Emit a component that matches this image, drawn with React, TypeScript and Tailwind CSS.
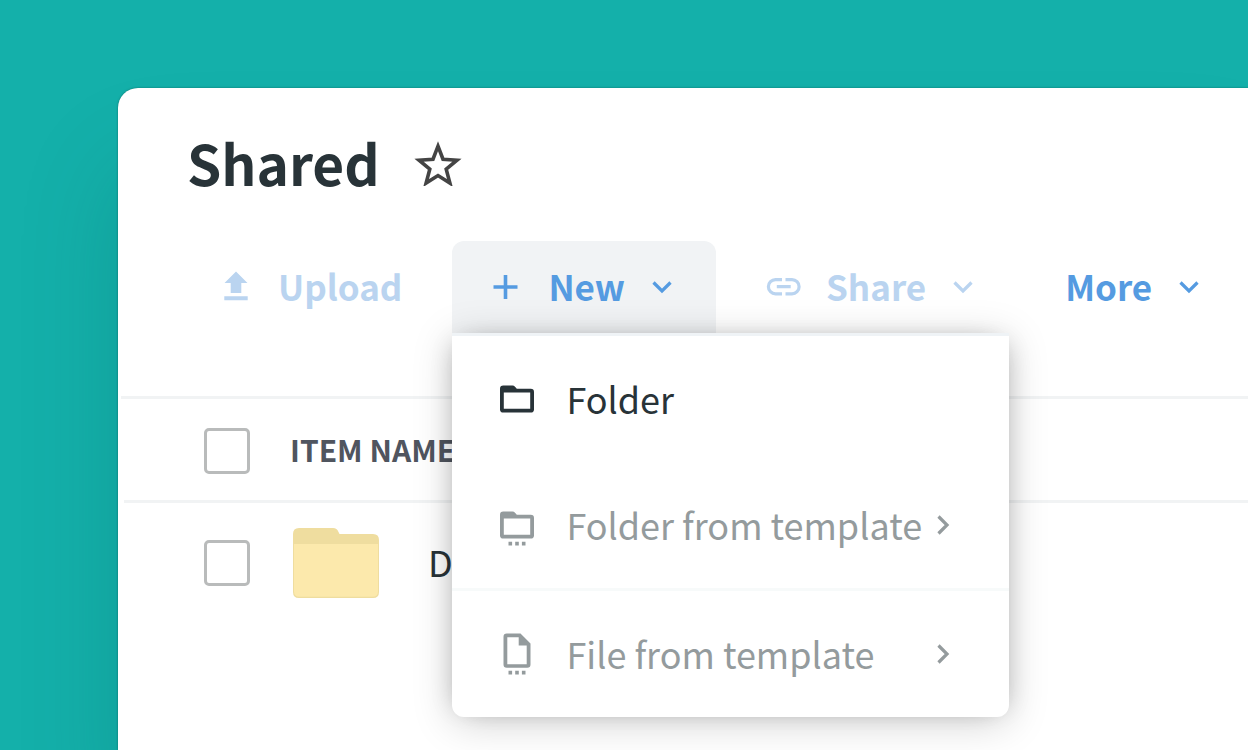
import type { ReactNode } from "react";

function Chevron({ direction = "down" }: { direction?: "down" | "right" }) {
  return (
    <svg viewBox="0 0 36 36" className="size-9 shrink-0" fill="none" stroke="currentColor" strokeWidth="3.200" aria-hidden="true">
      {direction === "down" ? <path d="M9.500 13.500 18 22l8.500-8.500" /> : <path d="M13.500 9.500 22 18l-8.500 8.500" />}
    </svg>
  );
}

function StarIcon() {
  return (
    <svg viewBox="0 -2 48 48" className="size-12" fill="none" stroke="currentColor" strokeWidth="3.600" aria-hidden="true">
      <path d="M24 6.200 29 19.200 43 20.200 32.200 29.200 35.900 43.100 24 35.600 12.100 43.100 15.800 29.200 5 20.200 19 19.200Z" />
    </svg>
  );
}

function UploadIcon() {
  return (
    <svg viewBox="0 0 36 36" className="size-9 shrink-0" fill="currentColor" aria-hidden="true">
      <path d="M18 2.500 29.500 14H23.300V24H12.700V14H6.500ZM6.300 27.200H29.700V31.200H6.300Z" />
    </svg>
  );
}

function PlusIcon() {
  return (
    <svg viewBox="0 0 36 36" className="size-9 shrink-0" stroke="currentColor" strokeWidth="3.600" aria-hidden="true">
      <path d="M17.500 6v24M5.500 18h24" />
    </svg>
  );
}

function LinkIcon() {
  return (
    <svg viewBox="0 0 36 36" className="size-9 shrink-0" fill="none" stroke="currentColor" strokeWidth="3.200" aria-hidden="true">
      <path d="M16 10.600H9.500a7.100 7.100 0 0 0 0 14.200H16M19.500 10.600H26a7.100 7.100 0 0 1 0 14.200H19.500M10.800 17.700H24.700" />
    </svg>
  );
}

function FolderOutlineIcon() {
  return (
    <svg viewBox="0 0 36 36" className="size-9 shrink-0" aria-hidden="true">
      <path
        fill="currentColor"
        fillRule="evenodd"
        d="M4.300 4.500H13.500Q15 4.500 16 5.700L17.800 7.800H31.700Q35 7.800 35 11V28.400Q35 31.500 31.700 31.500H4.300Q1 31.500 1 28.400V7.700Q1 4.500 4.300 4.500ZM4.800 11.500V27.800H31.200V11.500Z"
      />
    </svg>
  );
}

function FolderTemplateIcon() {
  return (
    <svg viewBox="0 0 36 36" className="size-9 shrink-0 overflow-visible" fill="currentColor" aria-hidden="true">
      <path
        fillRule="evenodd"
        d="M4.300 4.500H13.500Q15 4.500 16 5.700L17.800 7.800H31.700Q35 7.800 35 11V28.400Q35 31.500 31.700 31.500H4.300Q1 31.500 1 28.400V7.700Q1 4.500 4.300 4.500ZM4.800 11.500V27.800H31.200V11.500Z"
      />
      <path d="M9.500 34.800h3.600v3.600H9.500ZM16.200 34.800h3.600v3.600h-3.600ZM22.900 34.800h3.600v3.600h-3.600Z" />
    </svg>
  );
}

function FileTemplateIcon() {
  return (
    <svg viewBox="0 0 36 44" className="h-11 w-9 shrink-0" fill="currentColor" aria-hidden="true">
      <path
        fillRule="evenodd"
        d="M7.800 1.500H21.500L31.500 11.500V32.500Q31.500 35.800 28.200 35.800H7.800Q4.500 35.800 4.500 32.500V4.800Q4.500 1.500 7.800 1.500ZM8.300 5.300V32.200H27.700V13.500H19.700V5.300Z"
      />
      <path d="M9.500 38.800h3.600v3.600H9.500ZM16.200 38.800h3.600v3.600h-3.600ZM22.900 38.800h3.600v3.600h-3.600Z" />
    </svg>
  );
}

function FolderThumb() {
  return (
    <svg viewBox="0 0 86 70" className="h-[70px] w-[86px]" aria-label="Folder" role="img">
      <path fill="#efdd9f" d="M6 0H40Q44 0 45.500 4L46.500 6H80Q86 6 86 12V64Q86 70 80 70H6Q0 70 0 64V6Q0 0 6 0Z" />
      <path fill="#fce9ac" d="M1 16H85V63.500Q85 68.800 79.500 68.800H6.500Q1 68.800 1 63.500Z" />
    </svg>
  );
}

function ToolbarButton({ icon, label, disabled = false }: { icon?: ReactNode; label: string; disabled?: boolean }) {
  const hasMenu = label !== "Upload";
  return (
    <button
      type="button"
      disabled={disabled}
      className={`flex h-[92px] items-center rounded-lg pr-9 ${icon ? "pl-9" : "pl-[34px]"} ${
        disabled ? "text-[#bad4f0]" : "text-[#559be1]"
      }`}
    >
      {icon}
      <span className={`pb-0.5 ${icon ? "ml-6" : ""} ${hasMenu ? "mr-[19px]" : ""}`}>{label}</span>
      {hasMenu && <Chevron />}
    </button>
  );
}

function MenuItem({ icon, label, disabled = false }: { icon: ReactNode; label: string; disabled?: boolean }) {
  return (
    <button
      type="button"
      role="menuitem"
      disabled={disabled}
      className={`flex h-[126px] w-full items-center pr-12 pl-[47px] text-left text-[36px] font-normal ${
        disabled ? "text-[#949b9d]" : "text-[#283338]"
      }`}
    >
      {icon}
      <span className="ml-[31px] grow pb-0.5 whitespace-nowrap">{label}</span>
      {disabled && <Chevron direction="right" />}
    </button>
  );
}

function CheckBox({ label }: { label: string }) {
  return (
    <input
      type="checkbox"
      aria-label={label}
      className="block size-[46px] appearance-none rounded-[5px] border-3 border-[#b9bbbb] bg-white"
    />
  );
}

export default function App() {
  return (
    <div className="flex min-h-screen overflow-hidden bg-[#14b0aa] pt-[88px] pl-[118px] font-['Noto_Sans_CJK_SC','Source_Sans_Pro',sans-serif]">
      <main className="min-w-0 grow rounded-tl-[20px] bg-white pt-[34px] shadow-[0_0_2px_rgba(0,60,55,0.6),0_80px_100px_rgba(10,80,75,0.2)]">
        <header className="flex h-20 items-center gap-[34px] pl-[69px]">
          <h1 className="text-[55px] leading-[80px] font-bold text-[#283338]">Shared</h1>
          <button type="button" aria-label="Add to favorites" className="text-[#444444]">
            <StarIcon />
          </button>
        </header>

        <div className="mt-[39px] flex gap-[14px] pl-16 text-[35px] leading-[52px] font-bold whitespace-nowrap">
          <ToolbarButton icon={<UploadIcon />} label="Upload" disabled />
          <div className="relative">
            <button
              type="button"
              aria-haspopup="menu"
              aria-expanded="true"
              className="flex h-[92px] items-center rounded-t-xl bg-[#f1f3f5] px-9 text-[#559be1]"
            >
              <PlusIcon />
              <span className="mr-[19px] ml-6 pb-0.5">New</span>
              <Chevron />
            </button>
            <div
              role="menu"
              className="absolute top-full left-0 z-10 w-[557px] rounded-b-xl border-t-3 border-[#eff3f6] bg-white shadow-[0_6px_40px_rgba(0,0,0,0.18),-8px_0_24px_-12px_rgba(0,0,0,0.2),8px_0_24px_-12px_rgba(0,0,0,0.2)]"
            >
              <MenuItem icon={<FolderOutlineIcon />} label="Folder" />
              <MenuItem icon={<FolderTemplateIcon />} label="Folder from template" disabled />
              <hr className="border-t-3 border-[#f7fafa]" />
              <MenuItem icon={<FileTemplateIcon />} label="File from template" disabled />
            </div>
          </div>
          <ToolbarButton icon={<LinkIcon />} label="Share" disabled />
          <ToolbarButton label="More" />
        </div>

        <div className="mt-[63px] ml-[3px] border-t-3 border-[#f1f3f4] pl-[3px]">
          <table className="w-full text-left">
            <thead>
              <tr className="h-[102px] border-b-3 border-[#f1f3f4]">
                <th className="w-[166px] pt-1 pl-20">
                  <CheckBox label="Select all items" />
                </th>
                <th colSpan={2} className="text-[30px] leading-[46px] font-bold text-[#50555f]">
                  ITEM NAME
                </th>
              </tr>
            </thead>
            <tbody>
              <tr className="h-[122px]">
                <td className="pl-20">
                  <CheckBox label="Select D" />
                </td>
                <td className="w-[138px] pl-[3px]">
                  <FolderThumb />
                </td>
                <td className="pb-1 text-[36px] leading-[52px] text-[#283338]">D</td>
              </tr>
            </tbody>
          </table>
        </div>
      </main>
    </div>
  );
}
